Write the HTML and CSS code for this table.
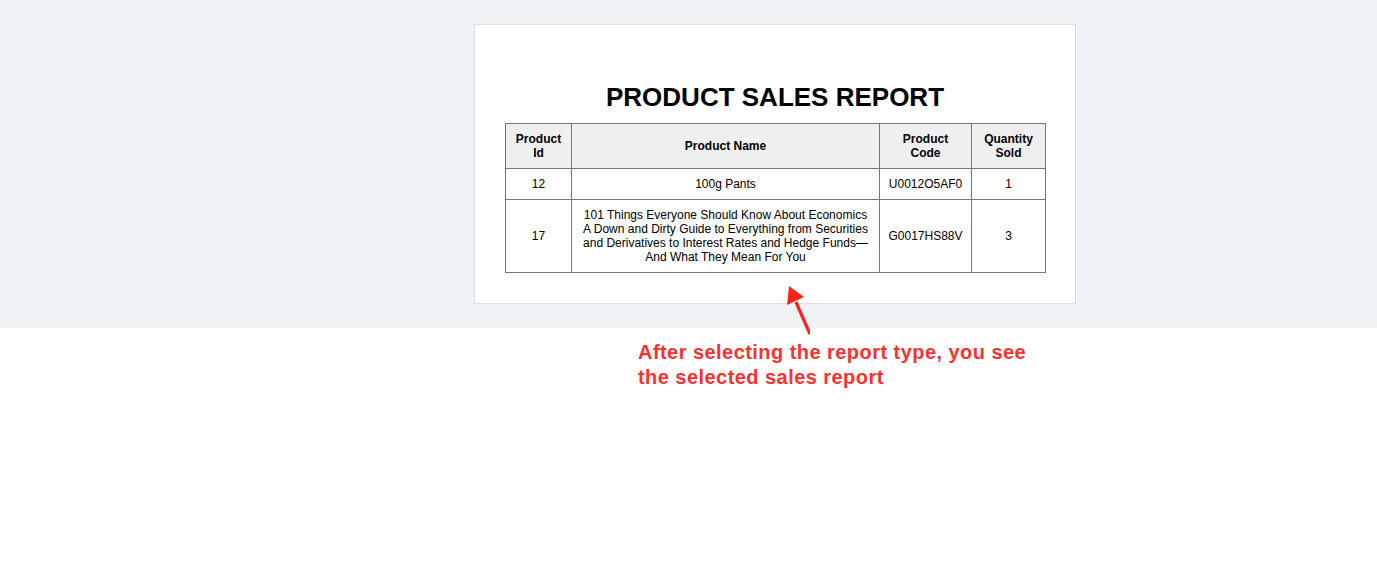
FILE: index.html
```html
<!DOCTYPE html>
<html>
<head>
<meta charset="utf-8">
<link rel="stylesheet" href="styles.css">
</head>
<body>
<div class="band">
  <div class="card">
    <h1 class="title">PRODUCT SALES REPORT</h1>
    <table class="report">
      <colgroup>
        <col class="c1"><col class="c2"><col class="c3"><col class="c4">
      </colgroup>
      <thead>
        <tr><th>Product<br>Id</th><th>Product Name</th><th>Product<br>Code</th><th>Quantity<br>Sold</th></tr>
      </thead>
      <tbody>
        <tr><td>12</td><td>100g Pants</td><td>U0012O5AF0</td><td>1</td></tr>
        <tr><td>17</td><td>101 Things Everyone Should Know About Economics A Down and Dirty Guide to Everything from Securities and Derivatives to Interest Rates and Hedge Funds—And What They Mean For You</td><td>G0017HS88V</td><td>3</td></tr>
      </tbody>
    </table>
  </div>
</div>
<p class="note">After selecting the report type, you see<br>the selected sales report</p>
<svg class="arrow" width="40" height="60" viewBox="770 280 40 60">
  <line x1="810" y1="334" x2="796" y2="302" stroke="#ff2219" stroke-width="3.2"/>
  <polygon points="789,286 787,305 804,297" fill="#ff2219"/>
</svg>
</body>
</html>
```
FILE: styles.css
```css
html, body {
  margin: 0;
  padding: 0;
  background: #ffffff;
  font-family: "Liberation Sans", Arial, sans-serif;
}
.band {
  background: #f0f3f6;
  height: 328px;
  box-sizing: border-box;
  padding: 24px 0 0 474px;
}
.card {
  background: #ffffff;
  border: 1px solid #dcdfe2;
  box-sizing: content-box;
  width: 540px;
  height: 221px;
  padding: 57px 30px 0 30px;
}
.title {
  margin: 0 0 11px 0;
  font-size: 26px;
  line-height: 30px;
  font-weight: bold;
  text-align: center;
  color: #000;
}
.report {
  width: 540px;
  border-collapse: collapse;
  table-layout: fixed;
  font-size: 12px;
  line-height: 14px;
  color: #000;
}
.report .c1 { width: 66px; }
.report .c2 { width: 308px; }
.report .c3 { width: 92px; }
.report .c4 { width: 74px; }
.report th, .report td {
  border: 1px solid #777777;
  padding: 8px 7px;
  text-align: center;
  vertical-align: middle;
}
.report th {
  background: #efefef;
  font-weight: bold;
}
.note {
  margin: 12px 0 0 638px;
  font-size: 20px;
  letter-spacing: 0.45px;
  line-height: 25px;
  font-weight: bold;
  color: #fc3131;
}
.arrow {
  position: absolute;
  left: 770px;
  top: 280px;
}
```
